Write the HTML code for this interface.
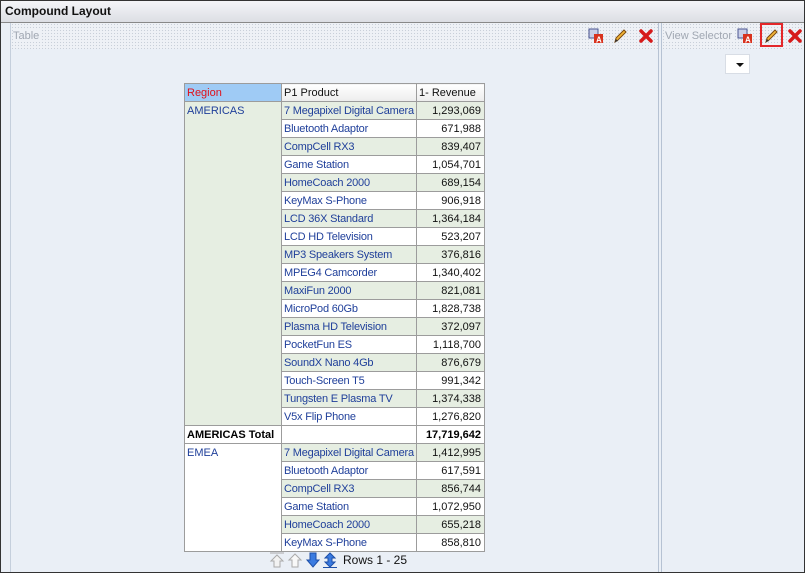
<!DOCTYPE html>
<html><head><meta charset="utf-8"><style>
*{box-sizing:border-box;margin:0;padding:0}
body{width:805px;height:573px;overflow:hidden;font-family:"Liberation Sans",Tahoma,sans-serif;font-size:11px;background:#fff;position:relative}
#frame{position:absolute;left:0;top:0;width:805px;height:573px;border:1px solid #333;background:#eaeff6}
#title{position:absolute;left:0;top:0;width:803px;height:22px;background:linear-gradient(#f4f5f8,#dcdee4);border-bottom:1px solid #888;font-weight:bold;font-size:12px;line-height:21px;padding-left:4px;color:#111}
.panel{position:absolute;top:22px;bottom:0;background:#eaeff6}
#left{left:9px;width:649px;border-left:1px solid #c5cfdc;border-right:1px solid #b6c2d3}
#right{left:660px;width:143px;border-left:1px solid #b6c2d3}
.hdr{position:absolute;left:0;right:0;top:0;height:26px;background-color:#eef1f6;background-image:radial-gradient(#c8cfd9 0.6px,transparent 0.8px);background-size:3px 3px;color:#a0a7b2;font-size:11px;line-height:26px;padding-left:2px}
.hdr span{background:#eef1f6;padding-right:2px}
.ic{position:absolute;top:5px;width:16px;height:16px}
table{position:absolute;left:183px;top:82px;width:300px;border-collapse:collapse;table-layout:fixed}
td{border:1px solid #9c9c9c;height:18px;padding:0 2px;white-space:nowrap;overflow:hidden;color:#1f3f9a;font-size:11px;line-height:16px;vertical-align:middle}
td.p{letter-spacing:-0.2px;padding:0 1px 0 2px}
td.n{text-align:right;color:#111;padding-right:3px}
tr.g td.p,tr.g td.n{background:#e6eee2}
tr.w td.p,tr.w td.n{background:#fff}
td.reg{background:#e6eee2;vertical-align:top;padding-top:1px}
th{border:1px solid #9c9c9c;height:18px;font-weight:normal;text-align:left;padding:0 2px;font-size:11px;color:#111;background:linear-gradient(#fff,#ececec)}
th.r{background:#9fcbf5;color:#e0101a}
tr.tot td{font-weight:bold;color:#000;background:#fff}
#pager{position:absolute;left:268px;top:551px;height:16px;font-size:12px;color:#111}
</style></head><body>
<div id="frame">
<div id="title">Compound Layout</div>
<div id="left" class="panel">
 <div class="hdr"><span>Table</span></div>
 <svg class="ic" style="left:577px" viewBox="0 0 16 16"><rect x="1" y="1" width="9" height="9" fill="#c9cfe8" stroke="#4a5590"/><rect x="6" y="6" width="9" height="9" fill="#d8321e"/><text x="8" y="14.5" font-size="8" font-weight="bold" fill="#fff" font-family="Liberation Sans">A</text></svg>
 <svg class="ic" style="left:601px" viewBox="0 0 16 16"><path d="M3 14 L4 10 L12 2 L14 4 L6 12 Z" fill="#f2b437" stroke="#7a4a10" stroke-width="1"/><path d="M3 14 L4 11 L6 13Z" fill="#333"/></svg>
 <svg class="ic" style="left:627px" viewBox="0 0 16 16"><path d="M3 3 L13 13 M13 3 L3 13" stroke="#d61a1a" stroke-width="3.5" stroke-linecap="round"/></svg>
</div>
<div id="right" class="panel">
 <div class="hdr" style="padding-left:3px"><span>View Selector</span></div>
 <svg class="ic" style="left:75px" viewBox="0 0 16 16"><rect x="1" y="1" width="9" height="9" fill="#c9cfe8" stroke="#4a5590"/><rect x="6" y="6" width="9" height="9" fill="#d8321e"/><text x="8" y="14.5" font-size="8" font-weight="bold" fill="#fff" font-family="Liberation Sans">A</text></svg>
 <div style="position:absolute;left:98px;top:0px;width:23px;height:24px;border:2px solid #e3272a"></div>
 <svg class="ic" style="left:101px" viewBox="0 0 16 16"><path d="M3 14 L4 10 L12 2 L14 4 L6 12 Z" fill="#f2b437" stroke="#7a4a10" stroke-width="1"/><path d="M3 14 L4 11 L6 13Z" fill="#333"/></svg>
 <svg class="ic" style="left:125px" viewBox="0 0 16 16"><path d="M3 3 L13 13 M13 3 L3 13" stroke="#d61a1a" stroke-width="3.5" stroke-linecap="round"/></svg>
 <div style="position:absolute;left:63px;top:31px;width:25px;height:20px;background:#fff;border:1px solid #d8dde5"><div style="position:absolute;left:10px;top:8px;border-left:4px solid transparent;border-right:4px solid transparent;border-top:4px solid #111"></div></div>
</div>
<table>
<colgroup><col style="width:97px"><col style="width:135px"><col style="width:68px"></colgroup>
<tr><th class="r">Region</th><th>P1 Product</th><th>1- Revenue</th></tr>
<tr class="g"><td class="reg" rowspan="18">AMERICAS</td><td class="p">7 Megapixel Digital Camera</td><td class="n">1,293,069</td></tr>
<tr class="w"><td class="p">Bluetooth Adaptor</td><td class="n">671,988</td></tr>
<tr class="g"><td class="p">CompCell RX3</td><td class="n">839,407</td></tr>
<tr class="w"><td class="p">Game Station</td><td class="n">1,054,701</td></tr>
<tr class="g"><td class="p">HomeCoach 2000</td><td class="n">689,154</td></tr>
<tr class="w"><td class="p">KeyMax S-Phone</td><td class="n">906,918</td></tr>
<tr class="g"><td class="p">LCD 36X Standard</td><td class="n">1,364,184</td></tr>
<tr class="w"><td class="p">LCD HD Television</td><td class="n">523,207</td></tr>
<tr class="g"><td class="p">MP3 Speakers System</td><td class="n">376,816</td></tr>
<tr class="w"><td class="p">MPEG4 Camcorder</td><td class="n">1,340,402</td></tr>
<tr class="g"><td class="p">MaxiFun 2000</td><td class="n">821,081</td></tr>
<tr class="w"><td class="p">MicroPod 60Gb</td><td class="n">1,828,738</td></tr>
<tr class="g"><td class="p">Plasma HD Television</td><td class="n">372,097</td></tr>
<tr class="w"><td class="p">PocketFun ES</td><td class="n">1,118,700</td></tr>
<tr class="g"><td class="p">SoundX Nano 4Gb</td><td class="n">876,679</td></tr>
<tr class="w"><td class="p">Touch-Screen T5</td><td class="n">991,342</td></tr>
<tr class="g"><td class="p">Tungsten E Plasma TV</td><td class="n">1,374,338</td></tr>
<tr class="w"><td class="p">V5x Flip Phone</td><td class="n">1,276,820</td></tr>
<tr class="tot"><td>AMERICAS Total</td><td></td><td class="n" style="font-weight:bold">17,719,642</td></tr>
<tr class="g"><td class="reg" rowspan="6" style="background:#fff">EMEA</td><td class="p">7 Megapixel Digital Camera</td><td class="n">1,412,995</td></tr>
<tr class="w"><td class="p">Bluetooth Adaptor</td><td class="n">617,591</td></tr>
<tr class="g"><td class="p">CompCell RX3</td><td class="n">856,744</td></tr>
<tr class="w"><td class="p">Game Station</td><td class="n">1,072,950</td></tr>
<tr class="g"><td class="p">HomeCoach 2000</td><td class="n">655,218</td></tr>
<tr class="w"><td class="p">KeyMax S-Phone</td><td class="n">858,810</td></tr>
</table>
<div id="pager">
<svg width="72" height="16" viewBox="0 0 72 16" style="vertical-align:top">
 <line x1="1" y1="1" x2="15" y2="1" stroke="#aaa"/>
 <path d="M8 3 L14 9 L11 9 L11 15 L5 15 L5 9 L2 9 Z" fill="#f2f2f2" stroke="#aaa"/>
 <path d="M26 2 L32 8 L29 8 L29 15 L23 15 L23 8 L20 8 Z" fill="#f8f8f8" stroke="#aaa"/>
 <path d="M41 1 L47 1 L47 8 L50 8 L44 15 L38 8 L41 8 Z" fill="#3b7be0" stroke="#1d4fa8"/>
 <path d="M61 1 L66 6 L63 6 L63 10 L66 10 L61 15 L56 10 L59 10 L59 6 L56 6 Z" fill="#3b7be0" stroke="#1d4fa8"/>
 <line x1="54" y1="15.5" x2="68" y2="15.5" stroke="#1d4fa8"/>
</svg><span style="position:relative;top:1px;left:2px">Rows 1 - 25</span>
</div>
</div>
</body></html>
